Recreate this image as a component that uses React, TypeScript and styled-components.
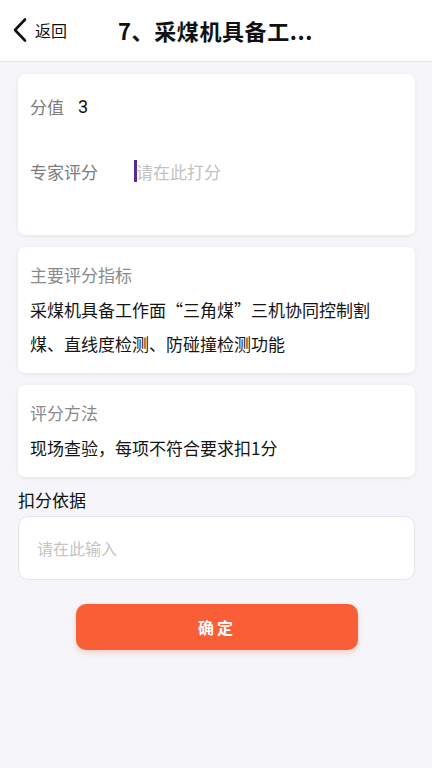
import React from "react";
import styled, { createGlobalStyle } from "styled-components";

const Global = createGlobalStyle`
  html, body { margin: 0; padding: 0; background: #f6f6fa; }
  body { font-family: "Noto Sans CJK SC", "Noto Sans", sans-serif; -webkit-font-smoothing: antialiased; }
  * { box-sizing: border-box; }
`;

const Page = styled.div`
  width: 432px;
  min-height: 768px;
  background: #f6f6fa;
  display: flex;
  flex-direction: column;
`;

const Header = styled.header`
  height: 62px;
  background: #fff;
  border-bottom: 1px solid #e6e6ec;
  display: flex;
  align-items: center;
  padding: 0 0 2px 12px;
`;

const Back = styled.div`
  display: flex;
  align-items: center;
  gap: 7px;
  width: 106px;
  font-size: 16px;
  color: #111;
`;

const Title = styled.h1`
  margin: 0;
  font-size: 22px;
  font-weight: 700;
  color: #111;
  letter-spacing: 0.6px;
`;

const Content = styled.main`
  padding: 12px 17px 0 18px;
  display: flex;
  flex-direction: column;
  gap: 12px;
`;

const Card = styled.section<{ $pad?: string }>`
  background: #fff;
  border-radius: 7px;
  box-shadow: 0 1px 4px rgba(0, 0, 0, 0.08);
  padding: ${(p) => p.$pad ?? "12px 40px 12px 12px"};
`;

const Row = styled.div<{ $h: number }>`
  height: ${(p) => p.$h}px;
  display: flex;
  align-items: center;
  font-size: 17px;
`;

const RowLabel = styled.span<{ $w: number }>`
  color: #7c7c7c;
  width: ${(p) => p.$w}px;
`;

const Value = styled.span`
  color: #111;
  font-size: 18px;
  font-family: "Roboto", "Noto Sans CJK SC", sans-serif;
`;

const Placeholder = styled.span`
  color: #c2c2c2;
  display: flex;
  align-items: center;
`;

const Caret = styled.span`
  display: inline-block;
  width: 3px;
  height: 22px;
  background: #5a2a94;
  margin-right: -1px;
`;

const Label = styled.div`
  font-size: 17px;
  line-height: 32px;
  color: #8a8a8a;
`;

const Body = styled.p`
  margin: 2px 0 0;
  font-size: 17px;
  line-height: 34px;
  color: #141414;
`;

const SectionTitle = styled.div`
  font-size: 17px;
  line-height: 22px;
  color: #111;
`;

const TextBox = styled.div`
  height: 64px;
  background: #fff;
  border: 1px solid #e3e3e8;
  border-radius: 10px;
  display: flex;
  align-items: center;
  padding-left: 18px;
  font-size: 16px;
  color: #c4c4c4;
  margin-top: -7px;
`;

const Button = styled.button`
  align-self: center;
  margin: 12px 0 0 1px;
  width: 282px;
  height: 46px;
  border: none;
  border-radius: 10px;
  background: #f95e36;
  color: #fff;
  font-family: inherit;
  font-size: 16px;
  font-weight: 700;
  letter-spacing: 3px;
  box-shadow: 0 3px 6px rgba(249, 94, 54, 0.25);
`;

export default function App() {
  return (
    <Page>
      <Global />
      <Header>
        <Back>
          <svg width="16" height="26" viewBox="0 0 16 26" fill="none">
            <path d="M13 2.5 L3 13 L13 23.5" stroke="#111" strokeWidth="2.6" strokeLinecap="round" strokeLinejoin="round" />
          </svg>
          <span>返回</span>
        </Back>
        <Title>7、采煤机具备工...</Title>
      </Header>
      <Content>
        <Card $pad="0 12px 31px 12px">
          <Row $h={64}>
            <RowLabel $w={48}>分值</RowLabel>
            <Value>3</Value>
          </Row>
          <Row $h={66}>
            <RowLabel $w={104}>专家评分</RowLabel>
            <Placeholder>
              <Caret />
              请在此打分
            </Placeholder>
          </Row>
        </Card>
        <Card>
          <Label>主要评分指标</Label>
          <Body>采煤机具备工作面“三角煤”三机协同控制割煤、直线度检测、防碰撞检测功能</Body>
        </Card>
        <Card>
          <Label>评分方法</Label>
          <Body>现场查验，每项不符合要求扣1分</Body>
        </Card>
        <SectionTitle>扣分依据</SectionTitle>
        <TextBox>请在此输入</TextBox>
        <Button>确定</Button>
      </Content>
    </Page>
  );
}
